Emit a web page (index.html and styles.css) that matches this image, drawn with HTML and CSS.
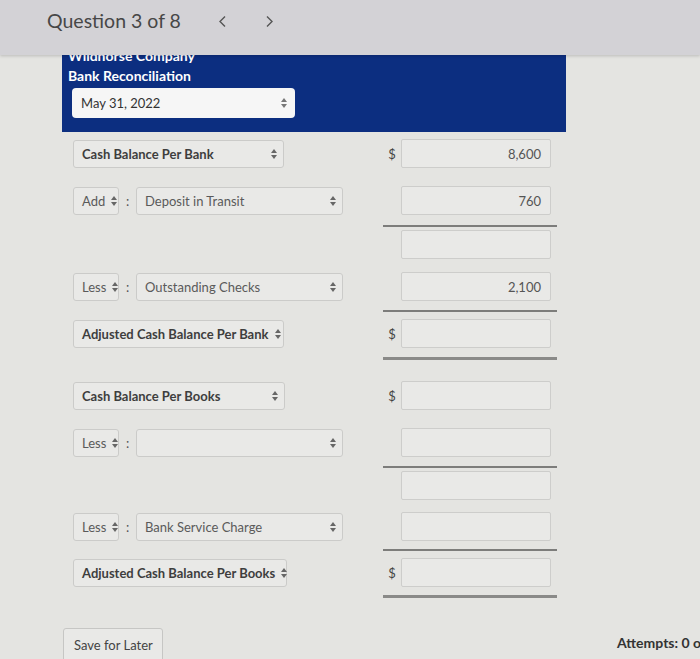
FILE: index.html
```html
<!DOCTYPE html>
<html lang="en">
<head>
<meta charset="utf-8">
<title>Question 3 of 8</title>
<link rel="stylesheet" href="styles.css">
</head>
<body>
<header class="topbar">
  <span class="qtitle">Question 3 of 8</span>
  <span class="nav nav-prev"><svg width="9" height="13" viewBox="0 0 9 13"><polyline points="7,1.5 2,6.5 7,11.5" fill="none" stroke="#555" stroke-width="1.4"/></svg></span>
  <span class="nav nav-next"><svg width="9" height="13" viewBox="0 0 9 13"><polyline points="2,1.5 7,6.5 2,11.5" fill="none" stroke="#555" stroke-width="1.4"/></svg></span>
</header>

<main class="content">
  <section class="recon-head">
    <div class="titles">
      <div>Wildhorse Company</div>
      <div>Bank Reconciliation</div>
    </div>
    <div class="select date"><span>May 31, 2022</span><svg class="arr" width="6" height="10" viewBox="0 0 6 10"><polygon points="0,4 3,0 6,4" fill="#777"/><polygon points="0,6 3,10 6,6" fill="#777"/></svg></div>
  </section>

  <div class="table">
    <div class="row m7">
      <div class="left"><div class="select strong w211"><span>Cash Balance Per Bank</span><svg class="arr" width="6" height="10" viewBox="0 0 6 10"><polygon points="0,4 3,0 6,4" fill="#666"/><polygon points="0,6 3,10 6,6" fill="#666"/></svg></div></div>
      <div class="sign">$</div>
      <div class="amt">8,600</div>
    </div>

    <div class="row m18">
      <div class="left">
        <div class="select small"><span>Add</span><svg class="arr" width="6" height="10" viewBox="0 0 6 10"><polygon points="0,4 3,0 6,4" fill="#666"/><polygon points="0,6 3,10 6,6" fill="#666"/></svg></div>
        <span class="colon">:</span>
        <div class="select item"><span>Deposit in Transit</span><svg class="arr" width="6" height="10" viewBox="0 0 6 10"><polygon points="0,4 3,0 6,4" fill="#666"/><polygon points="0,6 3,10 6,6" fill="#666"/></svg></div>
      </div>
      <div class="sign"></div>
      <div class="amt">760</div>
    </div>
    <div class="rule single r10"></div>

    <div class="row m3">
      <div class="left"></div>
      <div class="sign"></div>
      <div class="amt"></div>
    </div>

    <div class="row m13">
      <div class="left">
        <div class="select small"><span>Less</span><svg class="arr" width="6" height="10" viewBox="0 0 6 10"><polygon points="0,4 3,0 6,4" fill="#666"/><polygon points="0,6 3,10 6,6" fill="#666"/></svg></div>
        <span class="colon">:</span>
        <div class="select item"><span>Outstanding Checks</span><svg class="arr" width="6" height="10" viewBox="0 0 6 10"><polygon points="0,4 3,0 6,4" fill="#666"/><polygon points="0,6 3,10 6,6" fill="#666"/></svg></div>
      </div>
      <div class="sign"></div>
      <div class="amt">2,100</div>
    </div>
    <div class="rule single r9"></div>

    <div class="row m7">
      <div class="left"><div class="select strong w211"><span>Adjusted Cash Balance Per Bank</span><svg class="arr" width="6" height="10" viewBox="0 0 6 10"><polygon points="0,4 3,0 6,4" fill="#666"/><polygon points="0,6 3,10 6,6" fill="#666"/></svg></div></div>
      <div class="sign">$</div>
      <div class="amt"></div>
    </div>
    <div class="rule double r9"></div>

    <div class="row m21">
      <div class="left"><div class="select strong w212"><span>Cash Balance Per Books</span><svg class="arr" width="6" height="10" viewBox="0 0 6 10"><polygon points="0,4 3,0 6,4" fill="#666"/><polygon points="0,6 3,10 6,6" fill="#666"/></svg></div></div>
      <div class="sign">$</div>
      <div class="amt"></div>
    </div>

    <div class="row m18">
      <div class="left">
        <div class="select small"><span>Less</span><svg class="arr" width="6" height="10" viewBox="0 0 6 10"><polygon points="0,4 3,0 6,4" fill="#666"/><polygon points="0,6 3,10 6,6" fill="#666"/></svg></div>
        <span class="colon">:</span>
        <div class="select item"><span></span><svg class="arr" width="6" height="10" viewBox="0 0 6 10"><polygon points="0,4 3,0 6,4" fill="#666"/><polygon points="0,6 3,10 6,6" fill="#666"/></svg></div>
      </div>
      <div class="sign"></div>
      <div class="amt"></div>
    </div>
    <div class="rule single r9"></div>

    <div class="row m3">
      <div class="left"></div>
      <div class="sign"></div>
      <div class="amt"></div>
    </div>

    <div class="row m12">
      <div class="left">
        <div class="select small"><span>Less</span><svg class="arr" width="6" height="10" viewBox="0 0 6 10"><polygon points="0,4 3,0 6,4" fill="#666"/><polygon points="0,6 3,10 6,6" fill="#666"/></svg></div>
        <span class="colon">:</span>
        <div class="select item"><span>Bank Service Charge</span><svg class="arr" width="6" height="10" viewBox="0 0 6 10"><polygon points="0,4 3,0 6,4" fill="#666"/><polygon points="0,6 3,10 6,6" fill="#666"/></svg></div>
      </div>
      <div class="sign"></div>
      <div class="amt"></div>
    </div>
    <div class="rule single r8"></div>

    <div class="row m7">
      <div class="left"><div class="select strong w214"><span>Adjusted Cash Balance Per Books</span><svg class="arr" width="6" height="10" viewBox="0 0 6 10"><polygon points="0,4 3,0 6,4" fill="#666"/><polygon points="0,6 3,10 6,6" fill="#666"/></svg></div></div>
      <div class="sign">$</div>
      <div class="amt"></div>
    </div>
    <div class="rule double r8"></div>
  </div>

  <footer class="footer">
    <button class="save">Save for Later</button>
    <span class="attempts">Attempts: 0 of 3 used</span>
  </footer>
</main>
</body>
</html>
```

FILE: styles.css
```css
html, body {
  margin: 0;
  padding: 0;
}
body {
  width: 700px;
  height: 659px;
  overflow: hidden;
  background: #e4e4e1;
  font-family: Lato, "Noto Sans", "Liberation Sans", sans-serif;
  color: #444;
}

.topbar {
  position: relative;
  z-index: 1;
  height: 55px;
  box-sizing: border-box;
  padding: 9px 0 0 47px;
  background: #d3d2d6;
  display: flex;
  align-items: flex-start;
  box-shadow: 0 1px 3px rgba(0, 0, 0, 0.18);
}
.qtitle {
  font-size: 19.5px;
  line-height: 24px;
  color: #474747;
}
.nav {
  display: flex;
  align-items: center;
  height: 24px;
}
.nav-prev { margin-left: 37px; }
.nav-next { margin-left: 38px; }

.content {
  padding-left: 62px;
}

.recon-head {
  width: 504px;
  height: 77px;
  box-sizing: border-box;
  overflow: hidden;
  background: #0c2e80;
  padding-left: 6px;
}
.titles {
  margin-top: -9px;
  color: #fff;
  font-weight: 700;
  font-size: 14px;
  line-height: 20px;
}

.select {
  box-sizing: border-box;
  height: 28px;
  display: flex;
  align-items: center;
  justify-content: space-between;
  padding: 0 6px 0 8px;
  background: #e9e9e7;
  border: 1px solid #cbcbc9;
  border-radius: 3px;
  font-size: 13px;
  color: #5a5a5a;
  white-space: nowrap;
}
.select .arr {
  flex: none;
  margin-left: 6px;
}
.select.date {
  margin: 2px 0 0 4px;
  width: 223px;
  height: 30px;
  background: #f6f6f6;
  border: none;
  border-radius: 4px;
  color: #333;
  padding: 0 8px 0 9px;
}
.select.strong {
  font-weight: 700;
  color: #3e3e3e;
}
.w211 { width: 211px; }
.w212 { width: 212px; }
.w214 { width: 214px; }
.select.small { width: 46px; padding-right: 5px; }
.select.item { width: 207px; }

.colon {
  width: 17px;
  text-align: center;
  font-size: 13px;
  color: #555;
}

.table {
  padding-left: 11px;
}
.row {
  display: flex;
  align-items: center;
  height: 29px;
}
.left {
  width: 310px;
  display: flex;
  align-items: center;
}
.sign {
  width: 18px;
  text-align: center;
  font-size: 13px;
  color: #444;
}
.amt {
  box-sizing: border-box;
  width: 150px;
  height: 29px;
  display: flex;
  align-items: center;
  justify-content: flex-end;
  padding-right: 9px;
  background: #e9e9e7;
  border: 1px solid #cdcdcb;
  border-radius: 2px;
  font-size: 13px;
  color: #555;
}

.rule {
  margin-left: 310px;
  width: 174px;
}
.rule.single {
  height: 2px;
  background: #7d7d7b;
}
.rule.double {
  height: 3px;
  background: #8a8a88;
}

.m3 { margin-top: 3px; }
.m7 { margin-top: 7px; }
.m12 { margin-top: 12px; }
.m13 { margin-top: 13px; }
.m18 { margin-top: 18px; }
.m21 { margin-top: 21px; }
.r8 { margin-top: 8px; }
.r9 { margin-top: 9px; }
.r10 { margin-top: 10px; }

.footer {
  margin-top: 30px;
  display: flex;
  align-items: center;
  width: 800px;
}
.save {
  flex: none;
  margin-left: 1px;
  width: 100px;
  height: 34px;
  box-sizing: border-box;
  text-align: left;
  padding: 0 0 0 10px;
  white-space: nowrap;
  background: #e9e9e7;
  border: 1px solid #c6c6c4;
  border-radius: 3px;
  font-family: inherit;
  font-size: 13px;
  color: #444;
}
.attempts {
  flex: none;
  margin-left: 454px;
  margin-top: -6px;
  white-space: nowrap;
  font-size: 14px;
  font-weight: 700;
  color: #333;
}
```
